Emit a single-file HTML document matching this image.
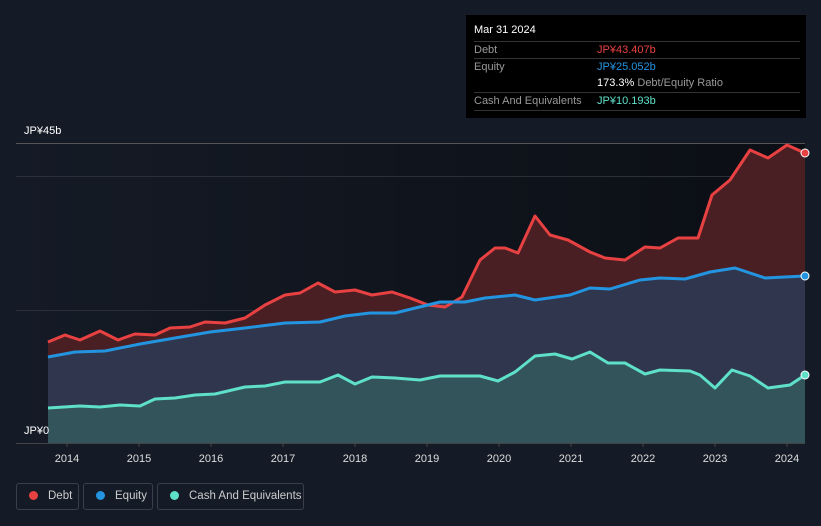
<!DOCTYPE html><html><head><style>
html,body{margin:0;width:821px;height:526px}
body{background:#151b26;font-family:"Liberation Sans",sans-serif;overflow:hidden;position:relative}
.t{position:absolute;font-size:11px;color:#fff}
.tip{position:absolute;left:466px;top:15px;width:340px;height:103px;background:#000;font-size:11px}
.row{position:absolute;left:8px;right:6px;border-top:1px solid #333;height:17px;line-height:17px;color:#999}
.leg{position:absolute;top:483px;height:27px;box-sizing:border-box;border:1px solid #3a404a;border-radius:3px;color:#ccc;font-size:11.5px;line-height:25px;white-space:nowrap}
.dot{display:inline-block;width:9px;height:9px;border-radius:50%;margin:0 10px 0 12px;vertical-align:-1px}
</style></head><body>
<svg width="821" height="526" style="position:absolute;left:0;top:0">
<defs><linearGradient id="bg" x1="0" x2="1"><stop offset="0" stop-color="#151b26"/><stop offset="1" stop-color="#0b0e14"/></linearGradient></defs>
<rect x="16" y="143" width="789" height="300" fill="url(#bg)"/>
<line x1="16" y1="143.5" x2="805" y2="143.5" stroke="#555" />
<line x1="16" y1="176.5" x2="805" y2="176.5" stroke="#2a2f38"/>
<line x1="16" y1="310.5" x2="805" y2="310.5" stroke="#2a2f38"/>
<path d="M48,342 L65,335 80,340 100,331 118,340 135,334 155,335 170,328 190,327 205,322 225,323 245,318 265,305 285,295 300,293 318,283 335,292 355,290 372,295 392,292 410,298 428,305 445,307 462,297 480,260 495,248 505,248 518,253 535,216 550,235 568,240 590,252 605,258 625,260 645,247 660,248 678,238 698,238 712,195 730,180 750,150 768,158 787,145 805,153 L805,443 48,443Z" fill="#4a1f24"/>
<path d="M48,357 L75,352 105,351 140,344 175,338 210,332 245,328 285,323 320,322 345,316 370,313 395,313 440,302 465,302 485,298 515,295 535,300 570,295 590,288 610,289 640,280 660,278 685,279 710,272 735,268 765,278 805,276 L805,443 48,443Z" fill="#30364d"/>
<path d="M48,408 L80,406 100,407 120,405 140,406 155,399 175,398 195,395 215,394 245,387 265,386 285,382 320,382 338,375 355,384 372,377 395,378 420,380 440,376 480,376 498,381 515,372 535,356 555,354 572,359 590,352 608,363 625,363 645,374 660,370 690,371 700,375 715,388 732,370 750,376 768,388 790,385 805,375 L805,443 48,443Z" fill="#32545a"/>
<g fill="none" stroke-width="3" stroke-linejoin="round">
<path d="M48,342 L65,335 80,340 100,331 118,340 135,334 155,335 170,328 190,327 205,322 225,323 245,318 265,305 285,295 300,293 318,283 335,292 355,290 372,295 392,292 410,298 428,305 445,307 462,297 480,260 495,248 505,248 518,253 535,216 550,235 568,240 590,252 605,258 625,260 645,247 660,248 678,238 698,238 712,195 730,180 750,150 768,158 787,145 805,153" stroke="#e84142"/>
<path d="M48,357 L75,352 105,351 140,344 175,338 210,332 245,328 285,323 320,322 345,316 370,313 395,313 440,302 465,302 485,298 515,295 535,300 570,295 590,288 610,289 640,280 660,278 685,279 710,272 735,268 765,278 805,276" stroke="#2394e0"/>
<path d="M48,408 L80,406 100,407 120,405 140,406 155,399 175,398 195,395 215,394 245,387 265,386 285,382 320,382 338,375 355,384 372,377 395,378 420,380 440,376 480,376 498,381 515,372 535,356 555,354 572,359 590,352 608,363 625,363 645,374 660,370 690,371 700,375 715,388 732,370 750,376 768,388 790,385 805,375" stroke="#5ee0c9"/>
</g>
<circle cx="805" cy="153" r="4" fill="#e84142" stroke="#fff"/>
<circle cx="805" cy="276" r="4" fill="#2394e0" stroke="#fff"/>
<circle cx="805" cy="375" r="4" fill="#5ee0c9" stroke="#fff"/>
<line x1="16" y1="443.5" x2="805" y2="443.5" stroke="#444"/>
<g stroke="#444"><line x1="67" y1="443" x2="67" y2="447"/><line x1="139" y1="443" x2="139" y2="447"/><line x1="211" y1="443" x2="211" y2="447"/><line x1="283" y1="443" x2="283" y2="447"/><line x1="355" y1="443" x2="355" y2="447"/><line x1="427" y1="443" x2="427" y2="447"/><line x1="499" y1="443" x2="499" y2="447"/><line x1="571" y1="443" x2="571" y2="447"/><line x1="643" y1="443" x2="643" y2="447"/><line x1="715" y1="443" x2="715" y2="447"/><line x1="787" y1="443" x2="787" y2="447"/></g>
<g fill="#ddd" font-size="11" text-anchor="middle" font-family="Liberation Sans"><text x="67" y="462">2014</text><text x="139" y="462">2015</text><text x="211" y="462">2016</text><text x="283" y="462">2017</text><text x="355" y="462">2018</text><text x="427" y="462">2019</text><text x="499" y="462">2020</text><text x="571" y="462">2021</text><text x="643" y="462">2022</text><text x="715" y="462">2023</text><text x="787" y="462">2024</text></g>
</svg>
<div class="t" style="left:24px;top:125px">JP¥45b</div>
<div class="t" style="left:24px;top:425px">JP¥0</div>
<div class="tip">
<div style="position:absolute;left:8px;top:9px;color:#fff">Mar 31 2024</div>
<div class="row" style="top:26px">Debt<span style="position:absolute;left:123px;color:#e84142">JP¥43.407b</span></div>
<div class="row" style="top:43px">Equity<span style="position:absolute;left:123px;color:#2394e0">JP¥25.052b</span></div>
<div class="row" style="top:60px;border:0"><span style="position:absolute;left:123px;color:#fff">173.3% <span style="color:#999">Debt/Equity Ratio</span></span></div>
<div class="row" style="top:77px;border-bottom:1px solid #333">Cash And Equivalents<span style="position:absolute;left:123px;color:#5ee0c9">JP¥10.193b</span></div>
</div>
<div class="leg" style="left:16px;width:63px"><span class="dot" style="background:#e84142"></span>Debt</div>
<div class="leg" style="left:83px;width:70px"><span class="dot" style="background:#2394e0"></span>Equity</div>
<div class="leg" style="left:157px;width:147px"><span class="dot" style="background:#5ee0c9"></span>Cash And Equivalents</div>
</body></html>
